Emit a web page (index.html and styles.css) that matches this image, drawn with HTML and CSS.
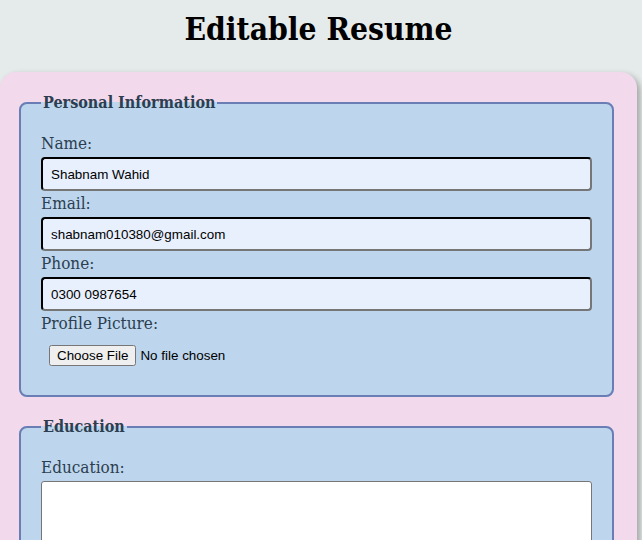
FILE: index.html
```html
<!DOCTYPE html>
<html lang="en">
<head>
<meta charset="utf-8">
<title>Editable Resume</title>
<link rel="stylesheet" href="styles.css">
</head>
<body>
<h1 class="title">Editable Resume</h1>
<div class="container">
  <fieldset class="section">
    <legend class="legend">Personal Information</legend>
    <label class="label" for="name">Name:</label>
    <input class="field" id="name" type="text" value="Shabnam Wahid">
    <label class="label" for="email">Email:</label>
    <input class="field" id="email" type="email" value="shabnam010380@gmail.com">
    <label class="label" for="phone">Phone:</label>
    <input class="field" id="phone" type="tel" value="0300 0987654">
    <label class="label" for="pic">Profile Picture:</label>
    <input class="file" id="pic" type="file">
  </fieldset>
  <fieldset class="section">
    <legend class="legend">Education</legend>
    <label class="label" for="edu">Education:</label>
    <textarea class="area" id="edu" rows="8"></textarea>
  </fieldset>
</div>
</body>
</html>
```
FILE: styles.css
```css
html, body {
  margin: 0;
  padding: 0;
}
body {
  background: #e5ebea;
  font-family: "DejaVu Serif Condensed", "DejaVu Serif", serif;
  color: #2c3e50;
  overflow: hidden;
}
.title {
  width: 637px;
  margin: 10px 0 25px;
  font-size: 31.5px;
  line-height: 37px;
  text-align: center;
  color: #000;
  font-weight: bold;
}
.container {
  width: 637px;
  box-sizing: border-box;
  padding: 20px 23px 20px 19px;
  background: #f2d9ec;
  border-radius: 16px;
  box-shadow: 3px 3px 6px rgba(0, 0, 0, 0.3);
}
.section {
  margin: 0 0 19px;
  padding: 17px 20px 21px;
  background: #bdd6ed;
  border: 2px solid #6a7db4;
  border-radius: 8px;
  min-inline-size: 0;
}
.legend {
  padding: 0 2px;
  font-size: 16px;
  font-weight: bold;
  line-height: 22px;
  color: #2c3e50;
}
.label {
  display: block;
  margin: 1px 0 3px;
  font-size: 17px;
  line-height: 22px;
}
.field {
  display: block;
  box-sizing: border-box;
  width: 100%;
  height: 34px;
  margin: 0;
  padding: 0 8px;
  background: #e8f0fe;
  border: 2px inset #767676;
  border-top-color: #1f2430;
  border-left-color: #1f2430;
  border-radius: 4px;
  font-family: "Liberation Sans", Arial, sans-serif;
  font-size: 13.4px;
  color: #000;
}
.file {
  display: block;
  padding: 8px;
  margin: 0;
  font-family: "Liberation Sans", Arial, sans-serif;
  font-size: 13.4px;
  color: #000;
}
.area {
  display: block;
  box-sizing: border-box;
  width: 100%;
  height: 120px;
  margin: 0;
  background: #fff;
  border: 1px solid #767676;
  border-radius: 3px;
}
```
